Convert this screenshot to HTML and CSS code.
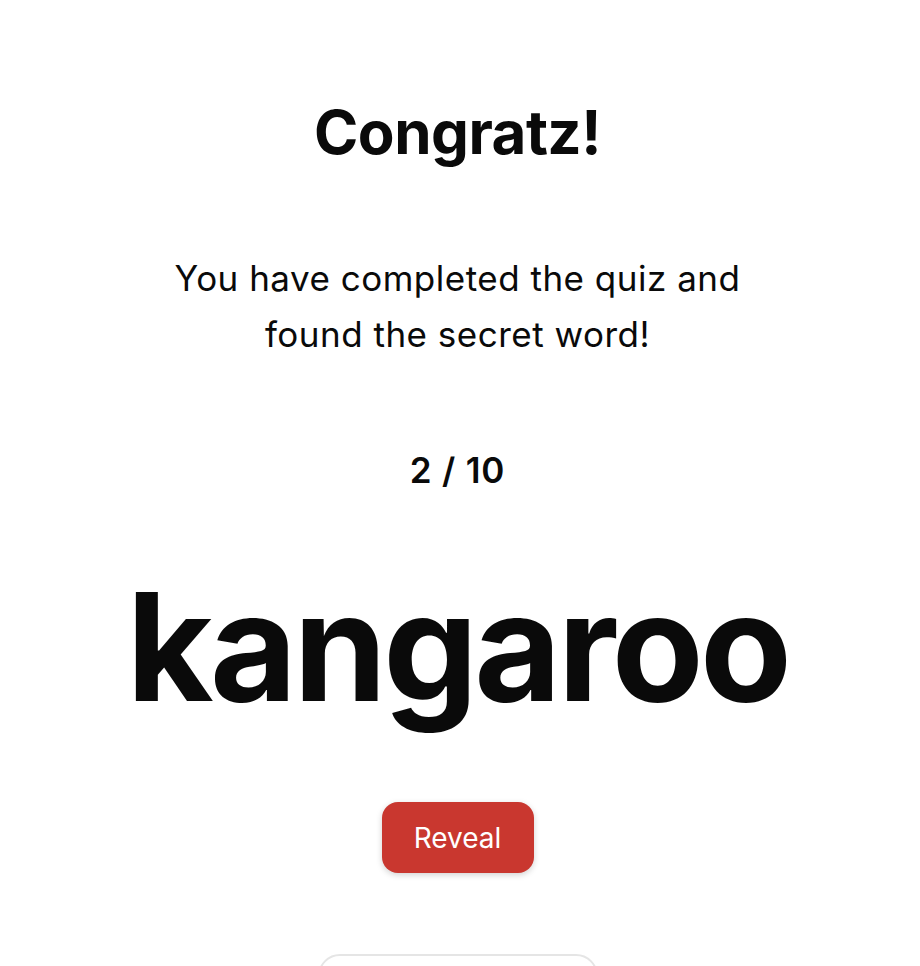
FILE: index.html
```html
<!DOCTYPE html>
<html lang="en">
<head>
<meta charset="utf-8">
<title>Congratz</title>
<link rel="stylesheet" href="styles.css">
</head>
<body>
<main class="page">
  <h1 class="title">Congratz!</h1>
  <p class="message">You have completed the quiz and found the secret word!</p>
  <div class="score">2 / 10</div>
  <div class="word">kangaroo</div>
  <button class="reveal" type="button">Reveal</button>
  <div class="next"></div>
</main>
</body>
</html>
```
FILE: styles.css
```css
html, body {
  margin: 0;
  padding: 0;
  background: #ffffff;
}
body {
  font-family: Inter, "Noto Sans", sans-serif;
  color: #0a0a0a;
  overflow: hidden;
  height: 966px;
}
.page {
  display: flex;
  flex-direction: column;
  align-items: center;
  text-align: center;
  padding-top: 96px;
  padding-right: 5px;
}
.title {
  margin: 0;
  font-size: 60px;
  line-height: 72px;
  font-weight: 700;
  letter-spacing: -0.5px;
}
.message {
  margin: 82px 0 0;
  width: 600px;
  font-size: 35px;
  line-height: 56px;
  font-weight: 400;
  letter-spacing: 0.5px;
}
.score {
  margin-top: 88px;
  font-size: 35px;
  line-height: 40px;
  font-weight: 600;
  letter-spacing: 0.8px;
}
.word {
  margin-top: 67px;
  font-size: 150px;
  line-height: 180px;
  font-weight: 700;
  letter-spacing: -3.6px;
}
.reveal {
  margin-top: 65px;
  width: 152px;
  height: 71px;
  border: none;
  border-radius: 16px;
  background: #c9372f;
  color: #ffffff;
  font-family: Inter, "Noto Sans", sans-serif;
  font-size: 28px;
  font-weight: 400;
  box-shadow: 0 2px 6px rgba(0, 0, 0, 0.18);
}
.next {
  margin-top: 81px;
  width: 276px;
  height: 40px;
  border: 2px solid #e5e5e5;
  border-radius: 22px;
}
```
